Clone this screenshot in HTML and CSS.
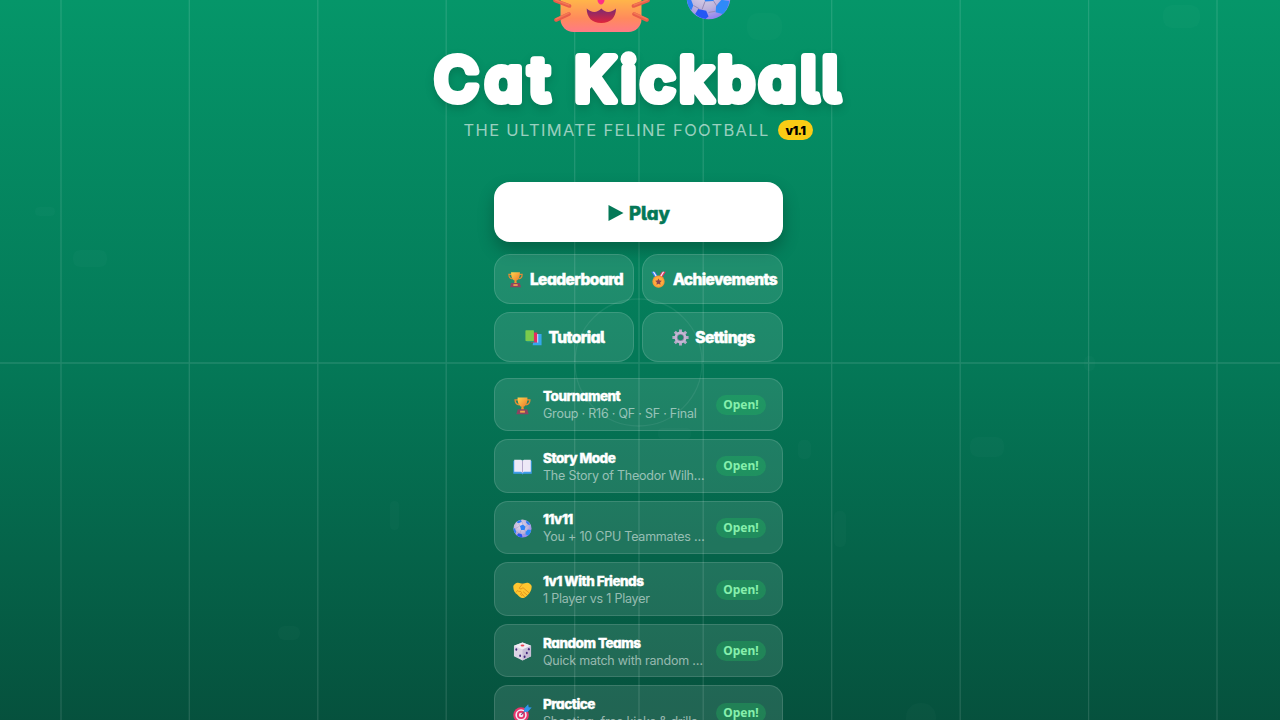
FILE: index.html
```html
<!DOCTYPE html>
<html lang="en">
<head>
  <meta charset="UTF-8" />
  <meta name="viewport" content="width=device-width, initial-scale=1.0" />
  <title>Cat Kickball</title>
  <link rel="stylesheet" href="styles.css">
</head>
<body>
  <!-- Icon set -->
  <svg class="icon-defs" aria-hidden="true">
    <defs>
      <linearGradient id="gold" x1="0" y1="0" x2="1" y2="1">
        <stop offset="0" stop-color="#ffd34d" />
        <stop offset="1" stop-color="#ee7a2c" />
      </linearGradient>
      <linearGradient id="fur" x1="0" y1="0" x2="0" y2="1">
        <stop offset="0" stop-color="#ffc24a" />
        <stop offset="0.65" stop-color="#ffb44a" />
        <stop offset="0.85" stop-color="#ff8a5c" />
        <stop offset="1" stop-color="#ff7a86" />
      </linearGradient>
      <linearGradient id="mouth" x1="0" y1="0" x2="0" y2="1">
        <stop offset="0" stop-color="#7a2a72" />
        <stop offset="1" stop-color="#e0243c" />
      </linearGradient>
      <radialGradient id="leather" cx="0.4" cy="0.35" r="0.7">
        <stop offset="0" stop-color="#e3dcec" />
        <stop offset="0.6" stop-color="#bdb2dc" />
        <stop offset="1" stop-color="#8a7cf5" />
      </radialGradient>
    </defs>
    <symbol id="trophy" viewBox="0 0 20 20">
      <path d="M5.5 4H2.2c0 3.500 1.600 5 4.300 5.300M14.500 4h3.300c0 3.500-1.600 5-4.300 5.300" fill="none" stroke="#e58a34" stroke-width="1.400" />
      <path d="M4.800 1.500h10.400c0 6-1.500 9.500-5.200 10.200C6.300 11 4.800 7.500 4.800 1.500z" fill="url(#gold)" />
      <path d="M9 11h2l.5 3.500h-3z" fill="#f09a30" />
      <path d="M5 14h10l1.500 5.200h-13z" fill="#8c4560" />
      <rect x="7.500" y="15.500" width="5" height="2" fill="#f3a64a" />
    </symbol>
    <symbol id="medal" viewBox="0 0 20 20">
      <path d="M1.500 1h4.500l4.500 7H6z" fill="#3a7df0" />
      <path d="M3.300 1h1.500l4.500 7H7.600z" fill="#f4f0ff" />
      <path d="M18.500 1H14L9.500 8H14z" fill="#f0375f" />
      <path d="M16.700 1h-1.500l-4.500 7h1.700z" fill="#f4f0ff" />
      <circle cx="10" cy="12.500" r="7.200" fill="#f79a35" />
      <circle cx="10" cy="12.500" r="5.600" fill="#ffac3f" />
      <path d="M10 8.800l1.200 2.400 2.700.4-2 1.900.5 2.600-2.400-1.200-2.400 1.200.5-2.600-2-1.900 2.700-.4z" fill="#8c4550" />
    </symbol>
    <symbol id="books" viewBox="0 0 20 20">
      <path d="M11 6h8.500v13H9z" fill="#36a7ee" />
      <path d="M8 4h6.500v12H7z" fill="#e42c60" />
      <rect x="14.500" y="6" width="1" height="10" fill="#f4e8ff" />
      <rect x="0.500" y="1.500" width="10" height="12.500" rx="0.800" fill="#7acb4c" />
      <path d="M1 14h9.500l1 1.500H3z" fill="#2b9b79" />
    </symbol>
    <symbol id="gear" viewBox="0 0 20 20">
      <g stroke="#b6a9c8" stroke-width="3.400">
        <path d="M10 .5v19M.5 10h19M3.300 3.300l13.400 13.400M16.700 3.300L3.300 16.700" />
      </g>
      <circle cx="10" cy="10" r="7" fill="#c3b8d2" />
      <circle cx="10" cy="10" r="4.200" fill="#8f7fa8" />
      <circle cx="10" cy="10" r="3.200" fill="#1f876a" />
    </symbol>
    <symbol id="book" viewBox="0 0 20 20">
      <path d="M.3 4h19.400v13.500H11l-1 .8-1-.8H.3z" fill="#3f9cec" />
      <path d="M1.300 3h7.200L10 4l1.500-1h7.200v12.500h-7.200l-1.500 1-1.500-1H1.300z" fill="#eee9f7" />
      <path d="M10 4v12.300" stroke="#b0a4c8" stroke-width="1" />
    </symbol>
    <symbol id="ball" viewBox="0 0 20 20">
      <circle cx="10" cy="10" r="9.500" fill="url(#leather)" />
      <path d="M7.300 7.300l3.200-1.500 2.700 2.300-1 3.400-3.700.2z" fill="#2d82f7" />
      <path d="M4.400 2.600l3.900-1.700.9 1.900-3 1.700-2.200-.7zM14.200 1.600l3 2.400.6 2.600-2.200-.8-1.900-2.200zM.6 9.500l1.500.6 1.300 3.400-.9 2C1.100 14.200.5 12 .6 9.500z" fill="#2f7cf7" />
      <path d="M13.300 13.700l2.300-2.700 3.400.5c-.2 2.200-1.300 4.300-2.800 5.700l-3.100-.8z" fill="#2f8af8" />
      <path d="M5.500 15l3.500.8 1 2.500-1.300 1.100c-1.800-.3-3.300-1.100-4.500-2.200z" fill="#2457f4" />
      <path d="M8.500 11.700l-1.300 3.500M12.200 11.500l1.400 2.200M13.200 8.100l2.500-1.900M10.500 5.800l-1-2.900M7.300 7.300L6 5M7.300 7.300l-4.900 2.900M10 16.500l3-.5M3.500 13.500l2.500 1.400" stroke="#9488b3" stroke-width="0.400" fill="none" />
    </symbol>
    <symbol id="handshake" viewBox="0 0 20 20">
      <path d="M.3 6C.3 4 3 1.800 5.300 1.800L10 3l4.700-1.200c2.300 0 5 2.200 5 4.200 0 4-2.500 7.500-5.500 10-1.500 1.300-3.300 2.100-4.500 2-1.500-.1-3.500-1.500-5-3.500C1.800 12.500.3 10 .3 6z" fill="#ffc62f" />
      <path d="M10 3L6.500 7.500c1 1.400 2.700 1 4-.5l6.500 5.500M3 12l2-2 1.500 1.500 1-1 1.500 1.700L8 14l1.500 1.500M11 11.500l3.500 3M9.500 13.500l2.500 3" fill="none" stroke="#db8519" stroke-width="0.800" stroke-linecap="round" />
    </symbol>
    <symbol id="dice" viewBox="0 0 20 20">
      <path d="M10 .5l9 3.500v11l-9 4.500-9-4.500V4z" fill="#ddd5e5" />
      <path d="M10 .5L19 4l-9 4-9-4z" fill="#f1ecf4" />
      <path d="M10 8l9-4v11l-9 4.500z" fill="#c7bdd6" />
      <ellipse cx="10" cy="3.700" rx="2" ry="1" fill="#ec4452" />
      <g fill="#44277c">
        <ellipse cx="3.500" cy="8" rx="1" ry="1.300" />
        <ellipse cx="7.500" cy="14.500" rx="1" ry="1.300" />
        <ellipse cx="16.700" cy="7.500" rx="1" ry="1.300" />
        <ellipse cx="14.500" cy="11.500" rx="1" ry="1.300" />
        <ellipse cx="12.200" cy="15.500" rx="1" ry="1.300" />
      </g>
    </symbol>
    <symbol id="target" viewBox="0 0 20 20">
      <circle cx="8.500" cy="11.500" r="8.200" fill="#e6356b" />
      <circle cx="8.500" cy="11.500" r="6" fill="#f3e7f5" />
      <circle cx="8.500" cy="11.500" r="4.300" fill="#e6356b" />
      <circle cx="8.500" cy="11.500" r="2.400" fill="#f3e7f5" />
      <path d="M8.500 11.500L15 5" stroke="#7a4a78" stroke-width="1.200" />
      <path d="M11.500 8.500l.5-4L16 .3l.5 3 3.200.5-4 4.300z" fill="#2f96ed" />
    </symbol>
  </svg>

  <div class="screen">
    <!-- Football pitch -->
    <svg class="pitch" viewBox="0 0 1280 720" aria-hidden="true">
      <g class="pitch-patches">
        <rect x="35" y="207" width="20" height="9" rx="4" />
        <rect x="73" y="250" width="34" height="17" rx="7" />
        <rect x="747" y="13" width="35" height="27" rx="11" />
        <rect x="1163" y="5" width="37" height="23" rx="9" />
        <rect x="970" y="437" width="34" height="20" rx="8" />
        <rect x="798" y="440" width="13" height="19" rx="5" />
        <rect x="658" y="428" width="33" height="11" rx="4" />
        <rect x="278" y="626" width="22" height="14" rx="6" />
        <rect x="390" y="501" width="9" height="29" rx="4" />
        <rect x="834" y="511" width="12" height="36" rx="5" />
        <rect x="906" y="703" width="30" height="30" rx="14" />
        <rect x="1084" y="356" width="11" height="15" rx="5" />
      </g>
      <path class="pitch-lines" d="M61 0v720M189.300 0v720M317.800 0v720M446.200 0v720M574.700 0v720M639 0v720M703.200 0v720M831.700 0v720M960.200 0v720M1088.600 0v720M1217 0v720M0 363h1280" />
      <circle class="pitch-circle" cx="638.500" cy="362.500" r="63.500" />
    </svg>

    <header class="hero">
      <svg class="mascots" viewBox="0 0 210 40" aria-hidden="true">
        <rect x="20.500" y="-58" width="81" height="90" rx="13" fill="url(#fur)" />
        <path d="M57.500 0h7c0 2.500-2 4.500-3.500 4.500S57.500 2.500 57.500 0z" fill="#ff2f86" />
        <path d="M46.700 8.500c4.500 4 10 5 14.600 0 4.600 5 10.100 4 14.700 0 0 9-5.500 14.500-14.700 14.500S46.700 17.500 46.700 8.500z" fill="url(#mouth)" />
        <path d="M15 .5L29.500 6M16 20l13-6M108 .5L93.500 6M107 20l-13-6" stroke="#e95c4a" stroke-width="3.600" stroke-linecap="round" />
        <path d="M15.500 0L29 5M107.500 0L94 5M16 19l13-6M107 19l-13-6" stroke="#f27953" stroke-width="1.400" stroke-linecap="round" />
        <use href="#ball" x="145.500" y="-25.500" width="46" height="46" />
      </svg>
      <h1>
        <svg class="logo" viewBox="0 0 430 76" role="img">
          <text class="logo-text" y="57">
            <tspan x="10.500" textLength="115">Cat</tspan>
            <tspan x="150.500" textLength="265">Kickball</tspan>
          </text>
        </svg>
      </h1>
      <p class="tagline">The Ultimate Feline Football <span class="version">v1.1</span></p>
    </header>

    <main class="menu">
      <button class="play"><svg class="play-icon" viewBox="0 0 16 18"><path d="M.5 1l15 8-15 8z" /></svg>Play</button>

      <div class="shortcuts">
        <button class="shortcut"><svg class="icon"><use href="#trophy" /></svg><span>Leaderboard</span></button>
        <button class="shortcut"><svg class="icon"><use href="#medal" /></svg><span>Achievements</span></button>
        <button class="shortcut"><svg class="icon"><use href="#books" /></svg><span>Tutorial</span></button>
        <button class="shortcut"><svg class="icon"><use href="#gear" /></svg><span>Settings</span></button>
      </div>

      <div class="modes">
        <div class="mode">
          <svg class="mode-icon"><use href="#trophy" /></svg>
          <div class="mode-text"><h2>Tournament</h2><p>Group · R16 · QF · SF · Final</p></div>
          <span class="badge">Open!</span>
        </div>
        <div class="mode">
          <svg class="mode-icon"><use href="#book" /></svg>
          <div class="mode-text"><h2>Story Mode</h2><p>The Story of Theodor Wilh…</p></div>
          <span class="badge">Open!</span>
        </div>
        <div class="mode">
          <svg class="mode-icon"><use href="#ball" /></svg>
          <div class="mode-text"><h2>11v11</h2><p>You + 10 CPU Teammates …</p></div>
          <span class="badge">Open!</span>
        </div>
        <div class="mode">
          <svg class="mode-icon"><use href="#handshake" /></svg>
          <div class="mode-text"><h2>1v1 With Friends</h2><p>1 Player vs 1 Player</p></div>
          <span class="badge">Open!</span>
        </div>
        <div class="mode">
          <svg class="mode-icon"><use href="#dice" /></svg>
          <div class="mode-text"><h2>Random Teams</h2><p>Quick match with random …</p></div>
          <span class="badge">Open!</span>
        </div>
        <div class="mode">
          <svg class="mode-icon"><use href="#target" /></svg>
          <div class="mode-text"><h2>Practice</h2><p>Shooting, free kicks &amp; drills</p></div>
          <span class="badge">Open!</span>
        </div>
      </div>
    </main>
  </div>
</body>
</html>
```
FILE: styles.css
```css
* {
  box-sizing: border-box;
}
body {
  margin: 0;
  font-family: Inter, "Liberation Sans", sans-serif;
  color: white;
}
h1, h2, p {
  margin: 0;
}
button {
  font-family: inherit;
  color: inherit;
  padding: 0;
}
.icon-defs {
  position: absolute;
  width: 0;
  height: 0;
}
.screen {
  position: relative;
  height: 720px;
  overflow: hidden;
  background: linear-gradient(180deg, #059669 0%, #047857 51%, #064e3b 104%);
}

/* Pitch behind the menu */
.pitch {
  position: absolute;
  inset: 0;
  width: 100%;
  height: 100%;
}
.pitch-patches {
  fill: rgba(255, 255, 255, 0.018);
}
.pitch-lines {
  fill: none;
  stroke: rgba(255, 255, 255, 0.12);
  stroke-width: 1.300;
}
.pitch-circle {
  fill: none;
  stroke: rgba(255, 255, 255, 0.07);
  stroke-width: 1.300;
}

/* Header */
.hero {
  position: relative;
  display: flex;
  flex-direction: column;
  align-items: center;
  width: 430px;
  margin: 0 auto;
  left: -1.500px;
}
.mascots {
  display: block;
  width: 210px;
  height: 40px;
  margin-left: 12px;
}
.hero h1 {
  height: 76px;
}
.logo {
  display: block;
  width: 430px;
  height: 76px;
  margin-top: 4px;
  overflow: visible;
  filter: drop-shadow(0 4px 4px rgba(0, 0, 0, 0.15));
}
.logo-text {
  font-size: 60px;
  font-weight: 500;
  font-feature-settings: "cv11", "cv05";
  fill: white;
  stroke: white;
  stroke-width: 8;
  stroke-linejoin: round;
}
.tagline {
  display: flex;
  align-items: center;
  gap: 8px;
  height: 28px;
  font-size: 16.500px;
  letter-spacing: 1.320px;
  text-transform: uppercase;
  white-space: nowrap;
  color: rgba(255, 255, 255, 0.6);
}
.version {
  height: 20px;
  padding: 0 8px;
  border-radius: 10px;
  background: #facc15;
  color: black;
  font-size: 12px;
  font-weight: 900;
  line-height: 21px;
  letter-spacing: -0.500px;
  text-transform: none;
}

/* Menu */
.menu {
  position: relative;
  left: -1.500px;
  width: 289px;
  margin: 38px auto 0;
}
.play {
  display: flex;
  align-items: center;
  justify-content: center;
  gap: 5px;
  width: 100%;
  height: 60px;
  padding: 2px 0 0 1px;
  border: 0;
  border-radius: 16px;
  background: white;
  color: #047857;
  font-size: 18.500px;
  font-weight: 800;
  font-feature-settings: "cv11", "cv05";
  -webkit-text-stroke: 0.500px #047857;
  box-shadow: 0 8px 16px rgba(0, 0, 0, 0.25);
}
.play-icon {
  width: 16px;
  height: 18px;
  fill: #047857;
}
.shortcuts {
  display: grid;
  grid-template-columns: 140px 141px;
  gap: 8px;
  margin-top: 12px;
}
.shortcut {
  display: flex;
  align-items: center;
  justify-content: center;
  gap: 6px;
  height: 50px;
  min-width: 0;
  padding-left: 2px;
  border: 1px solid rgba(255, 255, 255, 0.13);
  border-radius: 16px;
  background: rgba(255, 255, 255, 0.11);
  font-size: 15.500px;
  font-weight: 800;
  font-feature-settings: "cv11", "cv05";
  letter-spacing: -0.550px;
  -webkit-text-stroke: 0.500px white;
}
.icon {
  flex: none;
  width: 17px;
  height: 17px;
}
.modes {
  display: flex;
  flex-direction: column;
  gap: 8px;
  margin-top: 15.500px;
}
.mode {
  display: flex;
  align-items: center;
  height: 53.600px;
  padding: 1px 16px 0;
  border: 1px solid rgba(255, 255, 255, 0.13);
  border-radius: 14px;
  background: rgba(255, 255, 255, 0.11);
}
.mode-icon {
  flex: none;
  width: 19px;
  height: 19px;
  margin: 1px 11px 0 2px;
}
.mode-text {
  flex: 1;
  min-width: 0;
}
.mode-text h2 {
  font-size: 13.500px;
  font-weight: 800;
  line-height: 18px;
  font-feature-settings: "cv11", "cv05";
  letter-spacing: -0.500px;
  -webkit-text-stroke: 0.400px white;
}
.mode-text p {
  font-size: 12.500px;
  line-height: 17px;
  letter-spacing: -0.220px;
  white-space: nowrap;
  color: rgba(255, 255, 255, 0.54);
}
.badge {
  flex: none;
  width: 50px;
  height: 20px;
  margin-left: 11px;
  border-radius: 10px;
  background: rgba(34, 197, 94, 0.3);
  color: #86efac;
  font-family: "Noto Sans", sans-serif;
  font-size: 12px;
  font-weight: 700;
  line-height: 20px;
  text-align: center;
}
```
